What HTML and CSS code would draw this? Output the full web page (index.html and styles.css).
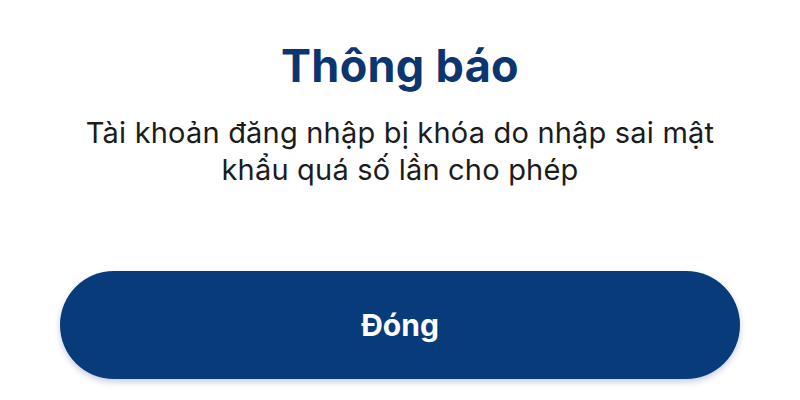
FILE: index.html
```html
<!DOCTYPE html>
<html lang="vi">
<head>
<meta charset="utf-8">
<link rel="stylesheet" href="styles.css">
</head>
<body>
<div class="dialog">
  <h1 class="title">Thông báo</h1>
  <p class="message">Tài khoản đăng nhập bị khóa do nhập sai mật<br>khẩu quá số lần cho phép</p>
  <button class="btn">Đóng</button>
</div>
</body>
</html>
```

FILE: styles.css
```css
html, body {
  margin: 0;
  padding: 0;
  background: #ffffff;
  width: 800px;
  height: 400px;
  overflow: hidden;
}
.dialog {
  display: flex;
  flex-direction: column;
  align-items: center;
  padding: 38px 60px 0;
  font-family: Inter, "Noto Sans", sans-serif;
}
.title {
  margin: 0;
  font-size: 45px;
  font-weight: 700;
  line-height: 56px;
  color: #0d3570;
  letter-spacing: 0.3px;
}
.message {
  margin: 20px 0 0;
  font-size: 29px;
  line-height: 37px;
  color: #1c1c1c;
  text-align: center;
  letter-spacing: 0.2px;
  white-space: nowrap;
}
.btn {
  margin-top: 83px;
  width: 680px;
  height: 108px;
  border: none;
  border-radius: 54px;
  background: #073b7a;
  color: #ffffff;
  font-family: Inter, "Noto Sans", sans-serif;
  font-size: 30px;
  font-weight: 700;
  box-shadow: 0 3px 6px rgba(30, 60, 140, 0.25);
}
```
